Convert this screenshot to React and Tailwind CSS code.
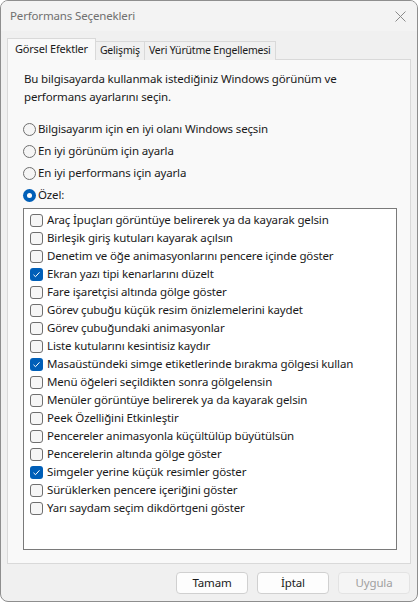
import { useState } from "react";

const options = [
  "Bilgisayarım için en iyi olanı Windows seçsin",
  "En iyi görünüm için ayarla",
  "En iyi performans için ayarla",
  "Özel:",
];

const effects = [
  ["Araç İpuçları görüntüye belirerek ya da kayarak gelsin", false],
  ["Birleşik giriş kutuları kayarak açılsın", false],
  ["Denetim ve öğe animasyonlarını pencere içinde göster", false],
  ["Ekran yazı tipi kenarlarını düzelt", true],
  ["Fare işaretçisi altında gölge göster", false],
  ["Görev çubuğu küçük resim önizlemelerini kaydet", false],
  ["Görev çubuğundaki animasyonlar", false],
  ["Liste kutularını kesintisiz kaydır", false],
  ["Masaüstündeki simge etiketlerinde bırakma gölgesi kullan", true],
  ["Menü öğeleri seçildikten sonra gölgelensin", false],
  ["Menüler görüntüye belirerek ya da kayarak gelsin", false],
  ["Peek Özelliğini Etkinleştir", false],
  ["Pencereler animasyonla küçültülüp büyütülsün", false],
  ["Pencerelerin altında gölge göster", false],
  ["Simgeler yerine küçük resimler göster", true],
  ["Sürüklerken pencere içeriğini göster", false],
  ["Yarı saydam seçim dikdörtgeni göster", false],
];

function Radio({ checked }) {
  if (checked) {
    return (
      <span className="w-[13px] h-[13px] rounded-full bg-[#005fb8] flex items-center justify-center shrink-0">
        <span className="w-[5px] h-[5px] rounded-full bg-white" />
      </span>
    );
  }
  return <span className="w-[13px] h-[13px] rounded-full border border-[#6f6f6f] bg-[#f5f5f5] shrink-0" />;
}

function Check({ checked }) {
  if (checked) {
    return (
      <span className="w-[13px] h-[13px] rounded-[3px] bg-[#005fb8] flex items-center justify-center shrink-0">
        <svg width="9" height="9" viewBox="0 0 9 9" fill="none">
          <path d="M1.5 4.8 L3.5 6.7 L7.5 2.3" stroke="white" strokeWidth="1" />
        </svg>
      </span>
    );
  }
  return <span className="w-[13px] h-[13px] rounded-[3px] border border-[#6f6f6f] bg-[#f6f6f6] shrink-0" />;
}

export default function App() {
  const [mode] = useState(3);

  return (
    <div className="w-[419px] h-[602px] bg-white text-[11.5px] tracking-[-0.15px] text-[#1a1a1a] font-['Noto_Sans',sans-serif]">
      <div className="w-[418px] h-[602px] rounded-lg border border-[#8e8e8e] bg-[#f0f0f0] flex flex-col overflow-hidden">
        {/* title bar */}
        <div className="h-[30px] bg-[#f3f3f3] flex items-center justify-between pl-[9px] pr-[10px]">
          <span className="text-[#707070]">Performans Seçenekleri</span>
          <svg width="11" height="11" viewBox="0 0 11 11" className="mr-[1px]">
            <path d="M0.5 0.5 L10.5 10.5 M10.5 0.5 L0.5 10.5" stroke="#8a8a8a" strokeWidth="1" />
          </svg>
        </div>

        <div className="px-[6px] pt-[7px] flex flex-col">
          {/* tabs */}
          <div className="flex items-end h-[22px] relative z-10 -mb-px text-[10.5px] tracking-[-0.2px]">
            <div className="h-[22px] px-[7px] bg-[#f9f9f9] border border-b-0 border-[#d9d9d9] flex items-center text-[11px]">
              Görsel Efektler
            </div>
            <div className="h-[19px] px-[4px] bg-[#f0f0f0] border border-l-0 border-b-0 border-[#d9d9d9] flex items-center">
              Gelişmiş
            </div>
            <div className="h-[19px] px-[4px] bg-[#f0f0f0] border border-l-0 border-b-0 border-[#d9d9d9] flex items-center">
              Veri Yürütme Engellemesi
            </div>
          </div>

          {/* panel */}
          <div className="h-[505px] border border-[#d9d9d9] bg-[#f9f9f9] px-[15px] pt-[10px]">
            <p className="leading-[18px] pl-px">
              Bu bilgisayarda kullanmak istediğiniz Windows görünüm ve
              <br />
              performans ayarlarını seçin.
            </p>

            <div className="mt-[12px] flex flex-col">
              {options.map((o, i) => (
                <div key={o} className="h-[22px] flex items-center gap-[2px]">
                  <Radio checked={mode === i} />
                  <span>{o}</span>
                </div>
              ))}
            </div>

            <div className="mt-[2px] w-[374px] h-[342px] border border-[#7a7a7a] bg-white pt-[2px] pl-[6px]">
              {effects.map(([label, on]) => (
                <div key={label} className="h-[18px] flex items-center gap-[4px]">
                  <Check checked={on} />
                  <span className="whitespace-nowrap">{label}</span>
                </div>
              ))}
            </div>
          </div>

          {/* buttons */}
          <div className="mt-[8px] flex justify-end gap-[9px] pr-[1px]">
            <button className="w-[72px] h-[22px] rounded-[4px] border border-[#d0d0d0] bg-[#fdfdfd]">
              Tamam
            </button>
            <button className="w-[72px] h-[22px] rounded-[4px] border border-[#d0d0d0] bg-[#fdfdfd]">
              İptal
            </button>
            <button className="w-[72px] h-[22px] rounded-[4px] border border-[#e3e3e3] bg-[#f5f5f5] text-[#a0a0a0]">
              Uygula
            </button>
          </div>
        </div>
      </div>
    </div>
  );
}
